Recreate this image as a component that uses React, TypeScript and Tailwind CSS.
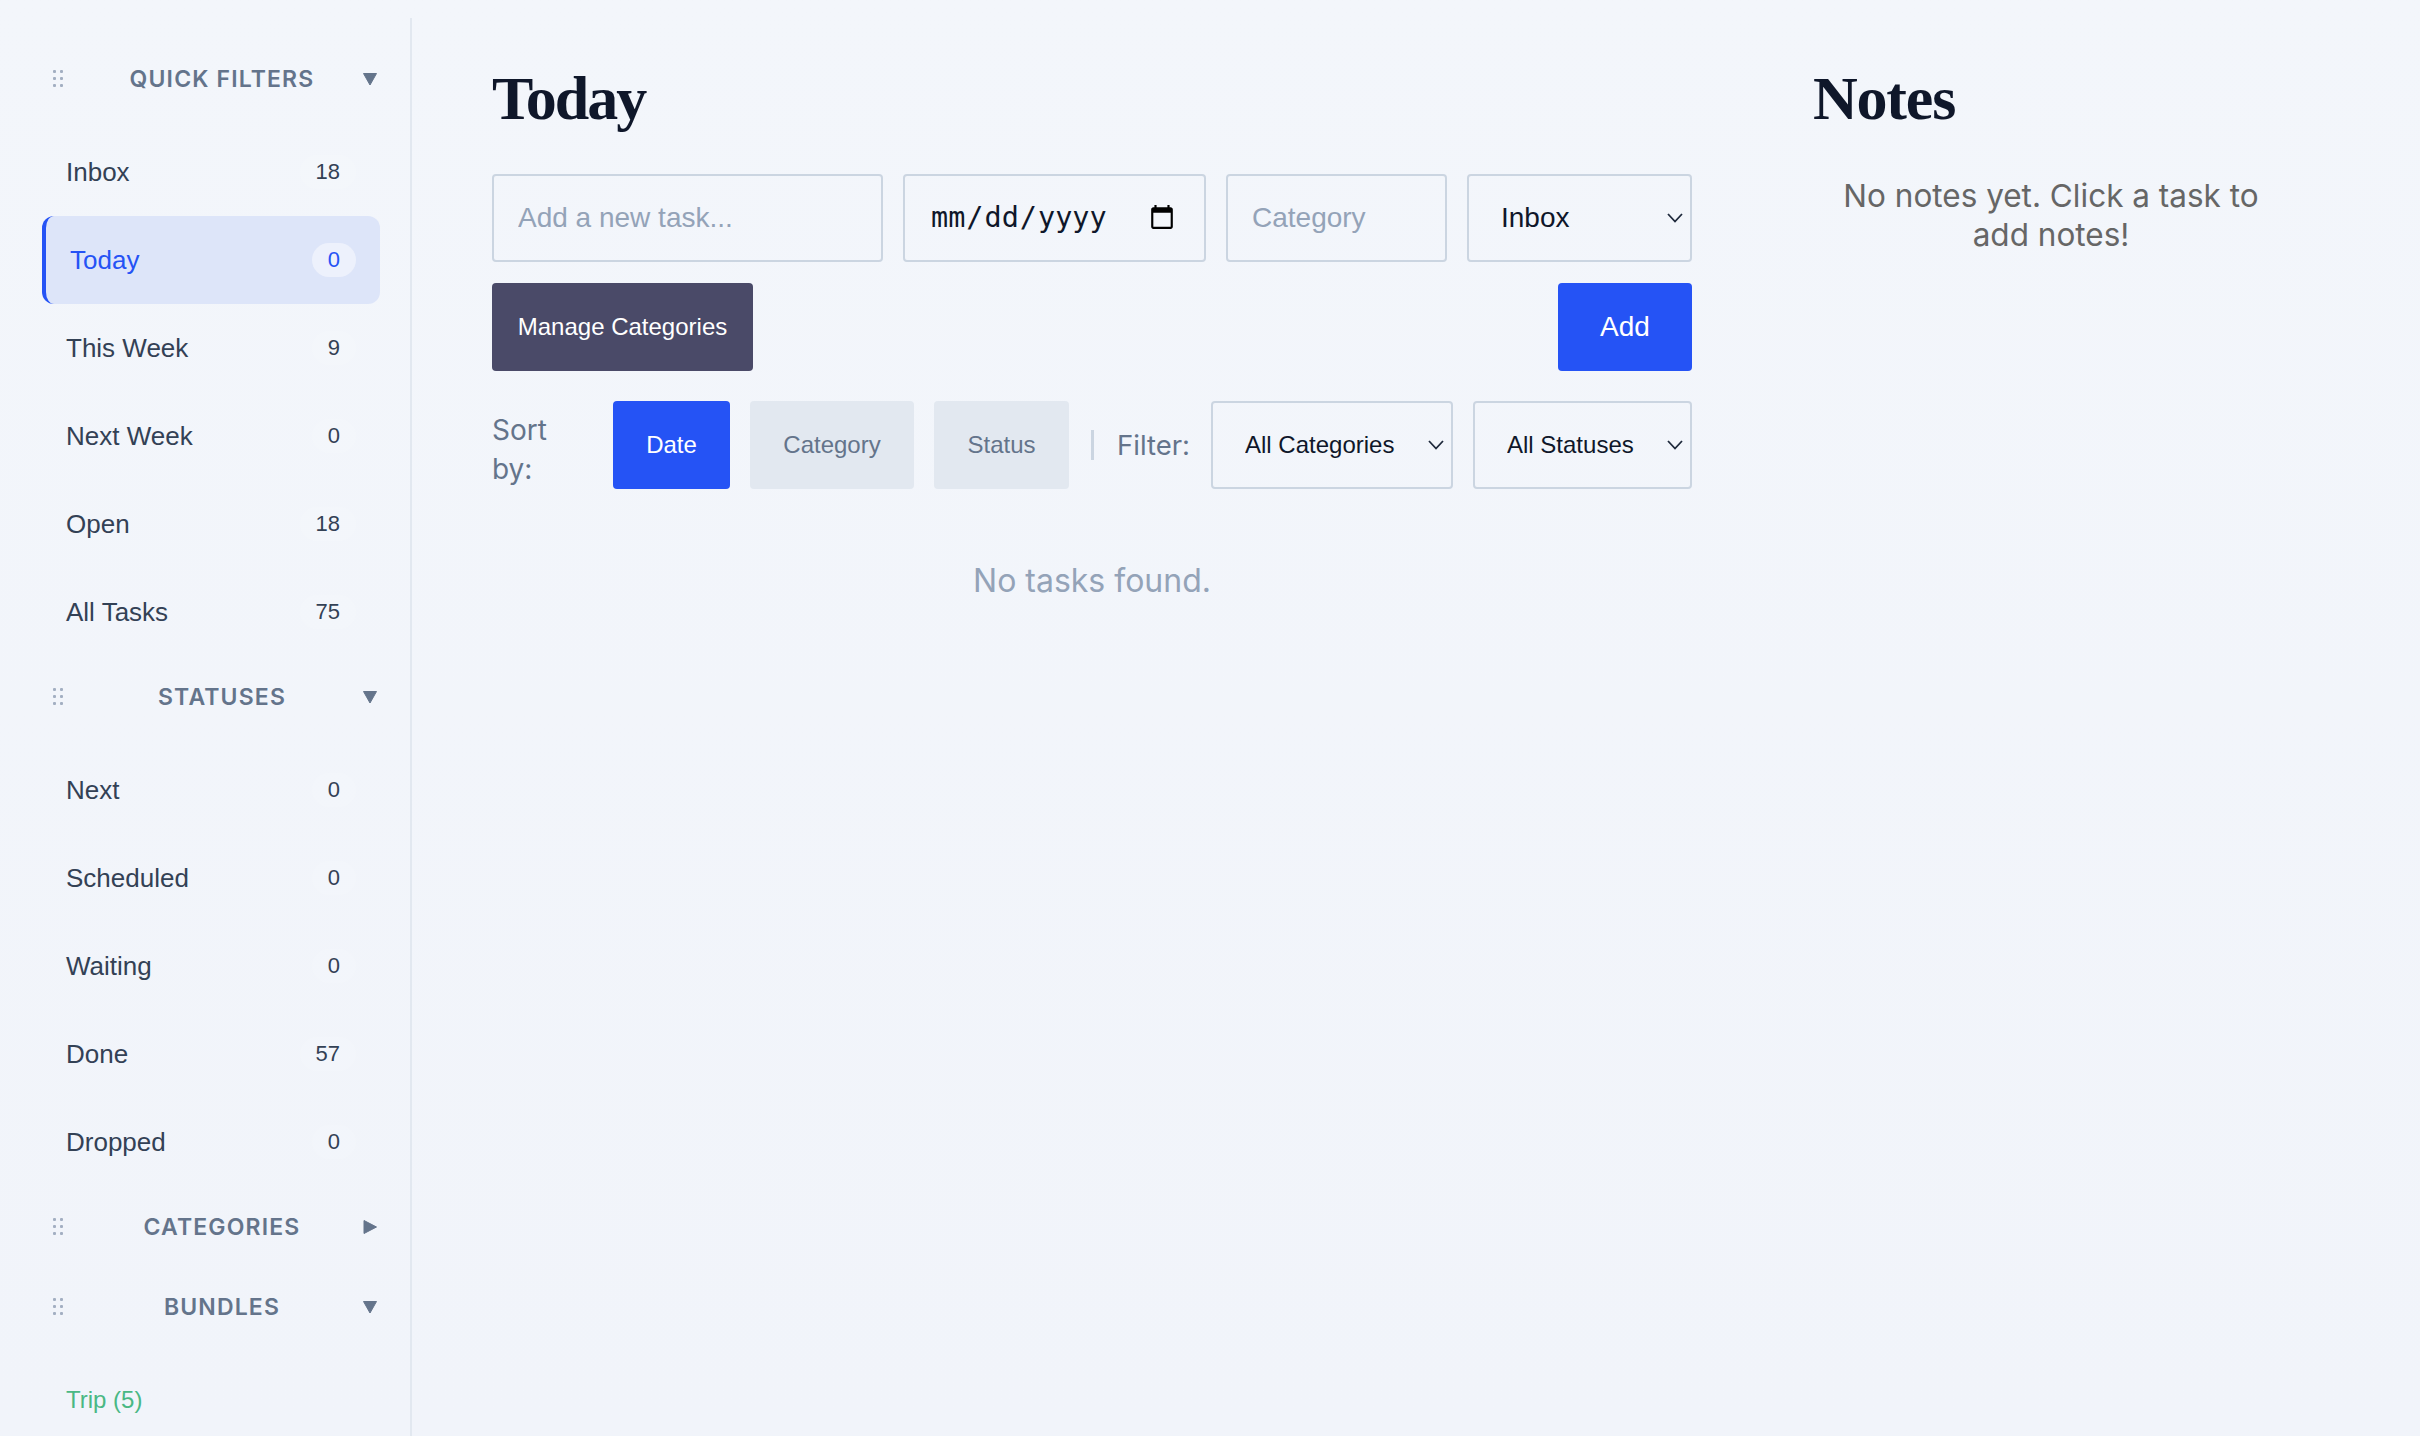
import React from 'react';

const sans = "font-['Liberation_Sans',Arial,sans-serif]";
const ui = "font-['Inter',sans-serif]";
const serif = "font-['Liberation_Serif',serif]";

const quickFilters = [
  { label: 'Inbox', count: 18 },
  { label: 'Today', count: 0, active: true },
  { label: 'This Week', count: 9 },
  { label: 'Next Week', count: 0 },
  { label: 'Open', count: 18 },
  { label: 'All Tasks', count: 75 },
];

const statuses = [
  { label: 'Next', count: 0 },
  { label: 'Scheduled', count: 0 },
  { label: 'Waiting', count: 0 },
  { label: 'Done', count: 57 },
  { label: 'Dropped', count: 0 },
];

const DragDots = () => (
  <svg width="10" height="18" viewBox="0 0 10 18" className="shrink-0 fill-[#a3afc2]">
    {[2, 9, 16].map((y) => (
      <React.Fragment key={y}>
        <rect x="0" y={y - 2} width="3" height="3" rx="1" />
        <rect x="7" y={y - 2} width="3" height="3" rx="1" />
      </React.Fragment>
    ))}
  </svg>
);

const SectionHeader = ({ title, open = true }: { title: string; open?: boolean }) => (
  <div className="pt-[16px] pb-[14px]">
    <div className="flex h-[50px] items-center pl-[53px] pr-[33px]">
      <DragDots />
      <span className={`flex-1 ml-[18px] text-center text-[23px] font-semibold tracking-[0.05em] uppercase text-[#64748b] ${ui}`}>
        {title}
      </span>
      <svg width="14" height="14" viewBox="0 0 14 14" className="shrink-0 fill-[#64748b] stroke-[#64748b]">
        {open ? (
          <polygon points="0.5,1.5 13.5,1.5 7,13" strokeWidth="1" strokeLinejoin="round" />
        ) : (
          <polygon points="1,0.5 1,13.5 13.5,7" strokeWidth="1" strokeLinejoin="round" />
        )}
      </svg>
    </div>
  </div>
);

const NavItem = ({ label, count, active }: { label: string; count: number; active?: boolean }) => (
  <div
    className={`flex h-[88px] items-center justify-between ml-[42px] mr-[30px] pr-[24px] rounded-[12px] ${sans} ${
      active
        ? 'bg-[#dde5f9] border-l-4 border-[#2553f5] pl-[24px] text-[#2553f5]'
        : 'pl-[24px] text-[#334155]'
    }`}
  >
    <span className="text-[26px]">{label}</span>
    <span
      className={`h-[34px] leading-[34px] px-[16px] rounded-full text-[22px] ${
        active ? 'bg-[#edf1fc] text-[#2553f5]' : 'bg-white/10 text-[#334155]'
      }`}
    >
      {count}
    </span>
  </div>
);

const Select = ({ value, width, textSize }: { value: string; width: string; textSize: string }) => (
  <div className={`relative h-[88px] ${width}`}>
    <select
      defaultValue={value}
      className={`w-full h-full appearance-none bg-transparent border-2 border-[#cbd5e1] rounded-[4px] pl-[32px] text-[#0f172a] ${textSize} ${sans}`}
    >
      <option>{value}</option>
    </select>
    <svg
      width="16"
      height="10"
      viewBox="0 0 16 10"
      className="absolute right-[9px] top-[39px] fill-none stroke-[#1e293b] stroke-[1.8] pointer-events-none"
    >
      <path d="M1 1l7 7.5L15 1" />
    </svg>
  </div>
);

const SortButton = ({ label, width, active }: { label: string; width: string; active?: boolean }) => (
  <button
    className={`h-[88px] rounded-[4px] text-[24px] ${width} ${sans} ${
      active ? 'bg-[#2553f5] text-white' : 'bg-[#e2e8f0] text-[#64748b]'
    }`}
  >
    {label}
  </button>
);

export default function App() {
  return (
    <div className="flex h-screen overflow-hidden bg-linear-to-b from-[#f3f6fb] to-[#f1f4fa]">
      {/* Sidebar */}
      <aside className="w-[412px] shrink-0 mt-[18px] pt-[20px] border-r-2 border-[#e2e8f0] overflow-hidden">
        <SectionHeader title="Quick Filters" />
        <div className="pt-[10px]">
          {quickFilters.map((item) => (
            <NavItem key={item.label} {...item} />
          ))}
        </div>
        <SectionHeader title="Statuses" />
        <div className="pt-[10px]">
          {statuses.map((item) => (
            <NavItem key={item.label} {...item} />
          ))}
        </div>
        <SectionHeader title="Categories" open={false} />
        <SectionHeader title="Bundles" />
        <div className="pt-[10px]">
          <div className={`flex h-[88px] items-center pl-[66px] text-[24px] text-[#4ab884] ${sans}`}>Trip (5)</div>
        </div>
      </aside>

      {/* Main column */}
      <main className="w-[1359px] shrink-0 pl-[80px] pr-[79px] pt-[56px]">
        <h1 className={`h-[84px] mb-[34px] text-[62px] leading-[84px] font-bold tracking-[-2px] text-[#0f172a] ${serif}`}>
          Today
        </h1>

        <div className="flex gap-[20px]">
          <input
            placeholder="Add a new task..."
            className={`w-[391px] h-[88px] bg-transparent border-2 border-[#cbd5e1] rounded-[4px] pl-[24px] text-[28px] placeholder:text-[#94a3b8] ${sans}`}
          />
          <input
            type="date"
            className="w-[303px] h-[88px] bg-transparent border-2 border-[#cbd5e1] rounded-[4px] pl-[25px] pr-[26px] text-[28.5px] text-[#0f172a] font-['DejaVu_Sans_Mono',monospace]"
          />
          <input
            placeholder="Category"
            className={`w-[221px] h-[88px] bg-transparent border-2 border-[#cbd5e1] rounded-[4px] pl-[24px] text-[28px] placeholder:text-[#94a3b8] ${sans}`}
          />
          <Select value="Inbox" width="w-[225px]" textSize="text-[28px]" />
        </div>

        <div className="flex justify-between mt-[21px]">
          <button className={`w-[261px] h-[88px] rounded-[4px] bg-[#4a4a68] text-[24px] text-white ${sans}`}>
            Manage Categories
          </button>
          <button className={`w-[134px] h-[88px] rounded-[4px] bg-[#2553f5] text-[28px] text-white ${sans}`}>
            Add
          </button>
        </div>

        <div className="flex items-center gap-[20px] mt-[30px]">
          <span className={`w-[101px] mt-[10px] text-[28px] leading-[39px] text-[#64748b] ${ui}`}>Sort by:</span>
          <SortButton label="Date" width="w-[117px]" active />
          <SortButton label="Category" width="w-[164px]" />
          <SortButton label="Status" width="w-[135px]" />
          <div className="w-[3px] h-[30px] ml-[2px] bg-[#cbd5e1]" />
          <span className={`ml-[3px] mr-[1px] mt-[2px] text-[27.5px] text-[#64748b] ${ui}`}>Filter:</span>
          <Select value="All Categories" width="w-[242px]" textSize="text-[24px]" />
          <Select value="All Statuses" width="w-[219px]" textSize="text-[24px]" />
        </div>

        <p className={`mt-[72px] text-center text-[32px] leading-[40px] text-[#94a3b8] ${ui}`}>No tasks found.</p>
      </main>

      {/* Notes panel */}
      <section className="w-[518px] shrink-0 pl-[42px] pt-[56px]">
        <h2 className={`h-[84px] text-[62px] leading-[84px] font-bold tracking-[-1.2px] text-[#0f172a] ${serif}`}>
          Notes
        </h2>
        <p className={`w-[476px] mt-[36px] text-center text-[31.5px] leading-[39px] text-[#666666] ${ui}`}>
          No notes yet. Click a task to add notes!
        </p>
      </section>
    </div>
  );
}
